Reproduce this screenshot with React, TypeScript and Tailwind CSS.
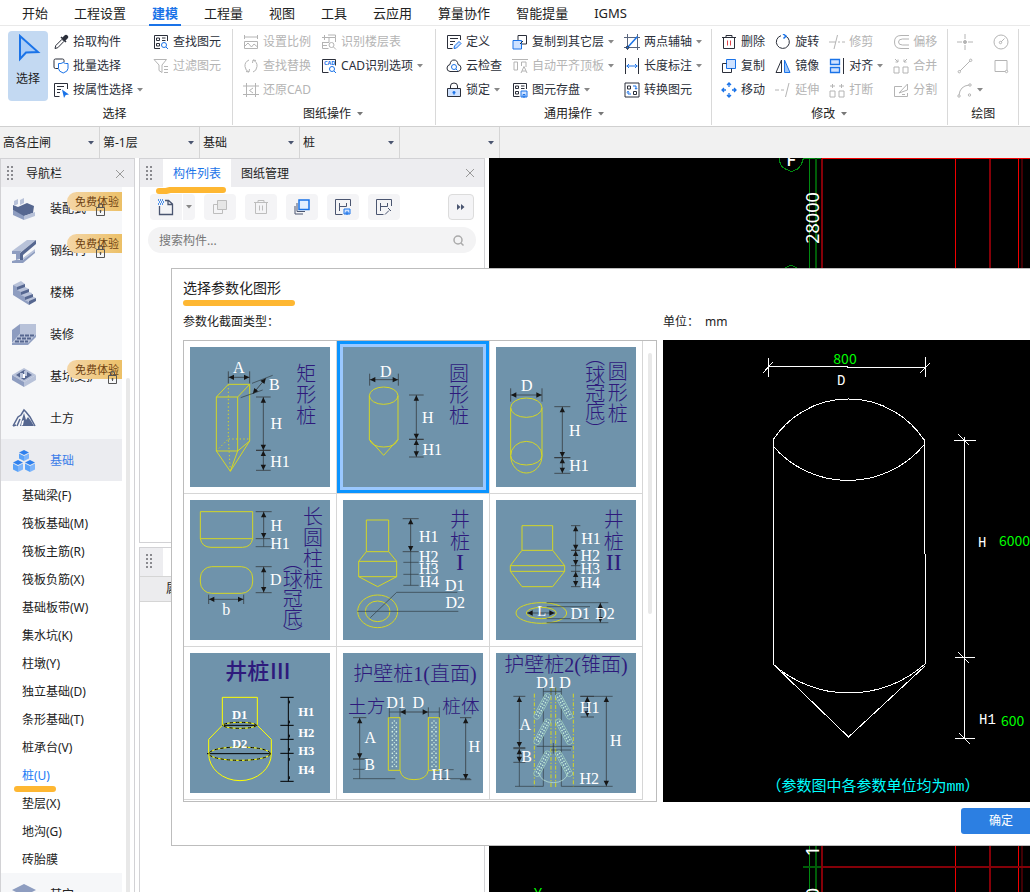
import React, { useState } from 'react';

const BLUE = '#1a73e8';
const SANS = '"Noto Sans", "Noto Sans CJK SC", sans-serif';
const SERIF = '"Liberation Serif", "Noto Sans CJK SC", serif';

/* ---------- 16px ribbon icons ---------- */

const icons: Record<string, React.ReactNode> = {
  pick: <><path d="M2 14.5l.8-3L9 5.300l2 2L4.800 13.700z" /><path d="M8 3l5 5M9.500 4.500L12 2q1-1 2 0t0 2l-2.500 2.500z" fill="currentColor" strokeWidth="1.500" /></>,
  batch: <><path d="M5 10.500H2.500q-1.500 0-1.500-1.500V2.500Q1 1 2.500 1h7Q11 1 11 2.500V4" /><path stroke={BLUE} d="M5.500 5.500q2.500.5 4.700-1Q12.500 6 15 5.500v5q0 3-4.800 4.500-4.700-1.500-4.700-4.500z" /></>,
  attr: <><path d="M14.500 7V1.500h-13v13h5M4 4.500h7M4 7.500h4M4 10.500h3" /><path fill={BLUE} stroke="none" d="M9 7.500l7 5-3.300.5-1.700 3z" /></>,
  find: <><path d="M14.500 7V1.500h-13v13H7M3.500 4h3v2.500h-3zM9 4h3.500M9 6.500h3.500M3.500 9.500h3V12h-3z" /><circle stroke={BLUE} cx="11" cy="11" r="2.500" /><path stroke={BLUE} d="M13 13l2 2" /></>,
  filter: <path d="M1 1.500h12.500L9 7v7.500l-3-2V7zM11 8.500h4M11 11.500h4M11 14.500h4" />,
  scale: <><path d="M1.500 1v4M14.500 1v4M1.500 3h13M1.500 7.500h13v7h-13zM2 12l3-3 3.500 4L11 10l3.500 3" /></>,
  replace: <path d="M6 2Q1.500 4 2 8.500T6 14M3 13.500l3 .5.500-3M10 2q4.500 2 4 6.500T10 14M13 2.500L10 2l-.5 3" />,
  restore: <path d="M0 4h16M3.500 1v14M0 12.500h16M12.500 1v14M10 6L6.500 8.500 10 11" />,
  floors: <path d="M3.500 1v5M1 3.500h13.500V8M7 1h7.500v2.500M1 8.500h7V4M1.500 8.500v6h6M1 11.500h5M10.500 8.500a2.500 2.500 0 100 5 2.500 2.500 0 000-5zM12.500 13l2.500 2.500" />,
  cad: <><path d="M14.500 7.500V1.500h-13v13h6" /><text x="3" y="7" fontSize="5.500" fontWeight="700" fill={BLUE} stroke="none">CAD</text><circle stroke={BLUE} cx="11" cy="11" r="2.500" /><path stroke={BLUE} d="M13 13l2 2" /></>,
  define: <><path d="M14.500 6V1.500h-13v13h5M4 4.500h8M4 7.500h5M4 10.500h3" /><path stroke={BLUE} fill="#cfe2ff" d="M8 14.500l.5-2.500 4.500-4.500 2 2-4.500 4.500z" /></>,
  cloud: <><path d="M4 13.500q-3.300-.5-3-3.500t3-3.500Q4.500 2 8 2t4 4.500q3 .5 3 3.500t-3 3.500z" /><circle stroke={BLUE} cx="8" cy="9" r="2.500" /><path stroke={BLUE} d="M10 11l1.500 1.500" /></>,
  lock: <><path fill="#cfe2ff" d="M1.500 6.500h13v8h-13z" /><path d="M4.500 6.500V4Q4.500 1 8 1t3.500 3v2.500" /><path stroke={BLUE} strokeWidth="1.500" d="M8 9v3.500M6.500 10.500h3" /></>,
  copy: <><path stroke={BLUE} fill="#cfe2ff" d="M5.500 1.500h9v9h-9z" /><path d="M5.500 5.500h-4v9h9v-4" /></>,
  layer: <><path stroke={BLUE} fill="#cfe2ff" d="M1 6.500h8.500V15H1z" /><path d="M6 6V1.500h8.500V10H10M8 10l3-3" /></>,
  autoAlign: <path d="M0 1.500h16M2 4h3.500v8H2zM9.500 8V4H14v5M9 15l3-6.500L15 15M10 13h4" />,
  save: <><path d="M14.500 7V1.500h-13v13h6M3.500 4h3v2.500h-3zM3.500 9.500h3V12h-3zM9 4h3.500M9 6.500h3.500" /><path stroke={BLUE} fill="#cfe2ff" d="M9 9h6v6H9zM11 15v-2.500h2V15z" /></>,
  axis: <><path d="M0 3.500h16M3.500 0v16M0 13.500h16M13.500 0v16" stroke="#59657c" /><path stroke={BLUE} strokeWidth="1.500" d="M3.500 13.500l10-11" /><circle cx="3.500" cy="13.500" r="1.300" fill={BLUE} /></>,
  length: <><path d="M1.500 0v16M14.500 0v16" /><path stroke={BLUE} d="M2.500 8h11M5 6L3 8l2 2M11 6l2 2-2 2" /></>,
  convert: <><path d="M1 1h14v14H1zM3.500 4h3v3h-3zM9.500 9.500h3v3h-3z" /><path stroke={BLUE} d="M9 4h3v3M11 6l1 1.300L13.300 6M7 12H4V9.500M3 10.500l1-1.300 1.200 1.300" /></>,
  trash: <><path d="M1 3.500h14M5 3.500v-2h6v2M2.500 3.500v11h11v-11" /><path stroke="#e0444b" d="M6.500 6.500v5M9.500 6.500v5" /></>,
  move: <path stroke={BLUE} strokeWidth="1.300" d="M8 1v4M8 11v4M1 8h4M11 8h4M6 3l2-2 2 2M6 13l2 2 2-2M3 6L1 8l2 2M13 6l2 2-2 2" />,
  rotate: <><path d="M6 1.700A6.500 6.500 0 1010.500 2" /><path stroke={BLUE} strokeWidth="1.500" d="M8 0l3 2-2.500 2.500" /></>,
  mirror: <><path d="M6.500 2v12.500H1z" /><path fill="#9cc5fa" stroke={BLUE} d="M9.500 2v12.500H15z" /></>,
  extend: <path d="M0 8h4M6 8h3M14 1l-3.500 14" />,
  trim: <path d="M0 8h7M9 8h2M13 8h3M8.500 1L5 15" />,
  align: <><path stroke={BLUE} fill="#cfe2ff" strokeWidth="1.300" d="M1.500 1.500h9v5h-9zM1.500 9.500h9v5h-9z" /><path d="M14.500 0v16" /></>,
  brk: <path d="M1 9h5v6H1zM10 9h5v6h-5zM3.500 2v4M1 4h5M12.500 2v4M10 4h5" />,
  merge: <path d="M1 9h5v6H1zM10 9h5v6h-5zM2 1l3 3M5 1.500V4H2.500M14 1l-3 3M11 1.500V4h2.500" />,
  offset: <path d="M16 1.500H8Q1.500 1.500 1.500 8T8 14.500h8M16 5H9.500Q5.500 5 5.500 8t4 3H16" />,
  split: <path d="M9 4.500H1.500v10h13V11M6 11l8.500-9v6zM9 12.500h3" />,
  point: <><path d="M0 8h5M11 8h5M8 0v5M8 11v5" /><circle cx="8" cy="8" r="1.500" fill="currentColor" /></>,
  line: <><path d="M3 13L13 3" /><circle cx="2.300" cy="13.700" r="1.200" /><circle cx="13.700" cy="2.300" r="1.200" /></>,
  arc: <><path d="M2 13Q3 4 12 3" /><circle cx="2" cy="14" r="1.200" /><circle cx="13" cy="3" r="1.200" /><circle cx="12.500" cy="13" r="1.200" /></>,
  circle: <><circle cx="8" cy="8" r="7" /><path d="M8 8l3.500-3.500" /><circle cx="7.500" cy="8.500" r="1.200" /></>,
  rect: <><path d="M2 2.500h12v11H2z" /><circle cx="13.500" cy="13.500" r="1.200" fill="white" /></>,
};

function Icon({ name }: { name: string }) {
  return (
    <svg width="16" height="16" viewBox="0 0 16 16" fill="none" stroke="currentColor" className="shrink-0">
      {icons[name]}
    </svg>
  );
}

function Caret() {
  return (
    <svg width="6" height="4" viewBox="0 0 6 4" className="shrink-0">
      <path d="M0 0h6L3 3.500z" fill="currentColor" />
    </svg>
  );
}

/* ---------- ribbon ---------- */

type Tool = { icon: string; label?: string; off?: boolean; caret?: boolean };

const tabs = ['开始', '工程设置', '建模', '工程量', '视图', '工具', '云应用', '算量协作', '智能提量', 'IGMS'];

const groups: { title: string; caret?: boolean; pad: string; columns: Tool[][] }[] = [
  {
    title: '选择',
    pad: 'pl-2 pr-[11px]',
    columns: [
      [{ icon: 'pick', label: '拾取构件' }, { icon: 'batch', label: '批量选择' }, { icon: 'attr', label: '按属性选择', caret: true }],
      [{ icon: 'find', label: '查找图元' }, { icon: 'filter', label: '过滤图元', off: true }],
    ],
  },
  {
    title: '图纸操作',
    caret: true,
    pad: 'pl-[10px] pr-3',
    columns: [
      [{ icon: 'scale', label: '设置比例', off: true }, { icon: 'replace', label: '查找替换', off: true }, { icon: 'restore', label: '还原CAD', off: true }],
      [{ icon: 'floors', label: '识别楼层表', off: true }, { icon: 'cad', label: 'CAD识别选项', caret: true }],
    ],
  },
  {
    title: '通用操作',
    caret: true,
    pad: 'pl-[10px] pr-[9px]',
    columns: [
      [{ icon: 'define', label: '定义' }, { icon: 'cloud', label: '云检查' }, { icon: 'lock', label: '锁定', caret: true }],
      [{ icon: 'layer', label: '复制到其它层', caret: true }, { icon: 'autoAlign', label: '自动平齐顶板', off: true, caret: true }, { icon: 'save', label: '图元存盘', caret: true }],
      [{ icon: 'axis', label: '两点辅轴', caret: true }, { icon: 'length', label: '长度标注', caret: true }, { icon: 'convert', label: '转换图元' }],
    ],
  },
  {
    title: '修改',
    caret: true,
    pad: 'pl-[9px] pr-[10px]',
    columns: [
      [{ icon: 'trash', label: '删除' }, { icon: 'copy', label: '复制' }, { icon: 'move', label: '移动' }],
      [{ icon: 'rotate', label: '旋转' }, { icon: 'mirror', label: '镜像' }, { icon: 'extend', label: '延伸', off: true }],
      [{ icon: 'trim', label: '修剪', off: true }, { icon: 'align', label: '对齐', caret: true }, { icon: 'brk', label: '打断', off: true }],
      [{ icon: 'offset', label: '偏移', off: true }, { icon: 'merge', label: '合并', off: true }, { icon: 'split', label: '分割', off: true }],
    ],
  },
  {
    title: '绘图',
    pad: 'pl-[9px] pr-[9px]',
    columns: [
      [{ icon: 'point', off: true }, { icon: 'line', off: true }, { icon: 'arc', off: true, caret: true }],
      [{ icon: 'circle', off: true }, { icon: 'rect', off: true }],
    ],
  },
];

function ToolButton({ tool }: { tool: Tool }) {
  return (
    <button
      aria-label={tool.label ?? tool.icon}
      disabled={tool.off}
      className={`flex h-6 items-center gap-1 whitespace-nowrap ${tool.off ? 'text-[#b4b4b4]' : 'text-[#2b2f3a]'}`}
    >
      <Icon name={tool.icon} />
      {tool.label && <span>{tool.label}</span>}
      {tool.caret && <span className="text-[#888]"><Caret /></span>}
    </button>
  );
}

function Ribbon() {
  const [tab, setTab] = useState('建模');
  return (
    <header className="shrink-0">
      <nav className="flex h-[26px] items-stretch gap-[26px] border-b border-[#e9e9e9] pl-[22px] text-[13px]">
        {tabs.map((t) => (
          <button
            key={t}
            onClick={() => setTab(t)}
            className={`relative shrink-0 pt-[3px] ${t === tab ? 'font-bold text-[#1a73e8]' : 'text-[#222]'}`}
          >
            {t}
            {t === tab && <span className="absolute -inset-x-[3px] -bottom-px h-[2px] bg-[#1a73e8]" />}
          </button>
        ))}
      </nav>
      <div className="flex border-b border-[#d0d0d0] pt-[3px] pb-px">
        {groups.map((g, i) => (
          <section key={g.title} className={`flex shrink-0 flex-col border-r border-[#d9d9d9] pt-px ${g.pad}`}>
            <div className="flex h-[72px] items-start">
              {i === 0 && (
                <button className="mt-px mr-[5px] flex h-[70px] w-10 flex-col items-center gap-[9px] rounded-sm bg-[#c3d9f2] pt-[3px]">
                  <svg width="24" height="28" viewBox="0 0 24 28" className="ml-[2px]">
                    <path d="M3 2v23l6-6.500 12-.5z" fill="#a9ccf7" stroke={BLUE} strokeWidth="2" />
                  </svg>
                  <span className="leading-4">选择</span>
                </button>
              )}
              <div className="flex gap-[10px]">
                {g.columns.map((col, c) => (
                  <div key={c} className="flex flex-col items-start">
                    {col.map((t) => <ToolButton key={t.icon} tool={t} />)}
                  </div>
                ))}
              </div>
            </div>
            <div className="flex h-[23px] items-center justify-center gap-[6px]">
              {g.title}
              {g.caret && <span className="text-[#777]"><Caret /></span>}
            </div>
          </section>
        ))}
      </div>
    </header>
  );
}

/* ---------- filter bar ---------- */

function FilterBar() {
  return (
    <div className="flex h-[31px] shrink-0 bg-[#f1f1f1]">
      {['高各庄闸', '第-1层', '基础', '桩', ''].map((v, i) => (
        <label key={i} className="relative flex w-[100px] items-center border-r border-[#d5d5d5]">
          <select aria-label={v || '构件'} className="h-full w-full appearance-none bg-transparent pl-[3px] text-[#222] outline-none">
            <option>{v}</option>
          </select>
          <span className="pointer-events-none absolute right-[5px] text-[#4a5570]"><Caret /></span>
        </label>
      ))}
    </div>
  );
}

/* ---------- shared panel parts ---------- */

function Grip() {
  return (
    <svg width="7" height="15" viewBox="0 0 7 15" fill="#8a8a8f" className="shrink-0">
      {[0, 4, 8, 12].map((y) => (
        <g key={y}><rect x="0" y={y} width="2" height="2" /><rect x="4" y={y} width="2" height="2" /></g>
      ))}
    </svg>
  );
}

function CloseButton() {
  return (
    <button aria-label="关闭" className="ml-auto mr-[9px] text-[#999]">
      <svg width="10" height="10" viewBox="0 0 10 10" stroke="currentColor"><path d="M1 1l8 8M9 1L1 9" /></svg>
    </button>
  );
}

/* ---------- navigation ---------- */

const D = '#566790';
const M = '#8e9dc0';
const L = '#b8c2d9';

const navIcons: Record<string, React.ReactNode> = {
  装配式: <><path fill={M} d="M1 13l11 5v5L1 18z" /><path fill={D} d="M1 8l5 2 9-4 7 3-1 7-9 3L1 13z" /><path fill={L} d="M2 4l4-2v5L2 9zM8 3l4-2v5L8 8zM12 19l11-4v4l-11 4z" /></>,
  钢结构: <><path fill={L} d="M0 12L15 1h9L9 13z" /><path fill={D} d="M24 1v4L11 16v5l-3 1v-8z" /><path fill={M} d="M0 12h9l-1 3H0zM4 15l4-1v6l-4 1z" /><path fill={L} d="M11 19l12-9v2L11 21z" /><path fill={M} d="M0 22l4-1h7l12-9v2L11 24H0z" /></>,
  楼梯: <><path fill={L} d="M1 4l8-4 4 3v3l4 2v3l3 1v3l4 2-8 4-3-2z" /><path fill={M} d="M1 4l4 2v3l4 2v3l4 2v3l4 2v3L1 14z" /><path fill={D} d="M5 6l8-3v3L5 9zM9 11l8-3v3l-8 3zM13 16l8-3v3l-8 3zM17 20l7-3v3l-7 4z" /></>,
  装修: <><path fill={L} d="M8 1h16v10H8z" /><path fill={M} d="M0 7l8-6v10l-8 9z" /><path fill={L} d="M8 11h16l-8 9H0z" /><path stroke={D} strokeWidth="2" strokeDasharray="4 1" d="M8 12.500h14M5 15.500h14M3 18.500h13" /><path fill={M} d="M0 20h16l8-9v3l-8 8H0z" /></>,
  基坑支护: <><path fill={L} d="M0 10L12 3l12 7-12 7z" /><path fill={D} d="M4 10l8-5 8 5-8 5z" /><path fill={M} d="M0 10l12 7v5L0 15z" /><path fill={L} d="M24 10l-12 7v5l12-7zM8 8h3v5H8zM12 6h3v5h-3z" /><path fill="white" d="M11 9h2v4h-2z" /></>,
  土方: <><path fill="none" stroke={D} strokeWidth="1.500" d="M1 19l5-9 3-2 3-5 2 2 4 5 5 9M1 19l3-1M8 12l-3 7" /><path fill={D} d="M8 19l4-13 2 7 2-3 3 4 3 5z" /><path fill="white" d="M10 14l-1 5 2-1 1-5z" /></>,
  基础: <><path fill="#2f80ed" d="M12 1l5 2.500L12 6 7 3.500zM6 11l5 2.500L6 16l-5-2.500zM18 11l5 2.500-5 2.500-5-2.500z" /><path fill="#5aa2f8" d="M7 4.500l5 2.500v5L7 9.500zM1 14.500L6 17v6l-5-2.500zM13 14.500l5 2.500v6l-5-2.500z" /><path fill="#7db5fb" d="M17 4.500L12 7v5l5-2.500zM11 14.500L6 17v6l5-2.500zM23 14.500L18 17v6l5-2.500z" /></>,
  其它: <><path fill={M} d="M0 7l12-6 12 6-12 6z" /><path fill={L} d="M0 12l12 6 12-6v4l-12 6-12-6z" /></>,
};

const navItems = [
  { label: '装配式', trial: true },
  { label: '钢结构', trial: true },
  { label: '楼梯' },
  { label: '装修' },
  { label: '基坑支护', trial: true },
  { label: '土方' },
  { label: '基础' },
];

const subItems = ['基础梁(F)', '筏板基础(M)', '筏板主筋(R)', '筏板负筋(X)', '基础板带(W)', '集水坑(K)', '柱墩(Y)', '独立基础(D)', '条形基础(T)', '桩承台(V)', '桩(U)', '垫层(X)', '地沟(G)', '砖胎膜'];

function NavItem({ label, trial, active }: { label: string; trial?: boolean; active?: boolean }) {
  return (
    <button className={`relative flex h-[42px] w-full shrink-0 items-center pt-[2px] pl-[11px] ${active ? 'bg-[#ebecf0] text-[#3b7de8]' : 'bg-[#f6f7f9] text-[#222]'}`}>
      <svg width="24" height="24" viewBox="0 0 24 24" className="shrink-0">{navIcons[label]}</svg>
      <span className="ml-[14px]">{label}</span>
      {trial && (
        <>
          <span className="absolute top-[5px] right-0 h-[19px] rounded-l-full bg-linear-to-r from-[#f4d6a6] to-[#ecc067] pr-[3px] pl-2 text-[11px] leading-[19px] text-[#6e4212]">免费体验</span>
          <svg width="9" height="13" viewBox="0 0 9 13" fill="none" stroke="#555" className="relative ml-[10px]">
            <path d="M.5 4.500h8v8h-8zM2.500 4.500V2q0-1.500 2-1.500t2 1.500v2.500M4.500 7v3M3.500 8h2" />
          </svg>
        </>
      )}
    </button>
  );
}

function Sidebar() {
  const [current, setCurrent] = useState('桩(U)');
  return (
    <aside className="flex w-[135px] shrink-0 flex-col border border-b-0 border-[#d2d2d5]">
      <div className="flex h-7 shrink-0 items-center bg-[#ededf0] pt-px pl-[6px]">
        <Grip />
        <span className="ml-3">导航栏</span>
        <CloseButton />
      </div>
      <div className="flex min-h-0 flex-1">
        <div className="flex w-[121px] flex-col overflow-hidden">
          {navItems.map((n) => <NavItem key={n.label} {...n} active={n.label === '基础'} />)}
          {subItems.map((s) => (
            <button
              key={s}
              onClick={() => setCurrent(s)}
              className={`relative h-7 shrink-0 pt-[2px] pl-[21px] text-left ${s === current ? 'text-[#1a7bf5]' : 'text-[#222]'}`}
            >
              {s}
              {s === current && <span className="absolute -bottom-[3px] left-[13px] h-[6px] w-[42px] rounded-full bg-[#feb732]" />}
            </button>
          ))}
          <NavItem label="其它" />
        </div>
        <div className="mt-[191px] ml-1 w-1 rounded-t-full bg-[#e8e8e8]" />
      </div>
    </aside>
  );
}

/* ---------- component list ---------- */

const toolBtn = 'flex h-[26px] items-center justify-center rounded bg-[#f4f4f6]';

function ComponentPanel() {
  return (
    <div className="flex w-[346px] shrink-0 flex-col gap-1">
      <section className="flex-[10] border border-[#d2d2d5]">
        <div className="flex h-7 items-center bg-[#ededf0] pl-[6px]">
          <Grip />
          <button className="relative ml-[10px] h-full bg-white px-[10px] pt-px text-[#1a73e8]">
            构件列表
            <svg width="72" height="9" viewBox="0 0 72 9" className="absolute -bottom-2 -left-2">
              <path d="M4 5h7l4-1h53" fill="none" stroke="#feb732" strokeWidth="6" strokeLinecap="round" strokeLinejoin="round" />
            </svg>
          </button>
          <button className="h-full px-[10px] pt-px">图纸管理</button>
          <CloseButton />
        </div>
        <div className="flex gap-[9px] px-[10px] pt-[7px] text-[#4a5570]">
          <div className="flex gap-px">
            <button aria-label="新建" className={`${toolBtn} w-8 rounded-r-none`}>
              <svg width="18" height="18" viewBox="0 0 18 18" fill="none" stroke="currentColor"><path strokeWidth="1.300" d="M2.500 8v8.500h13V6L11.500 2.500H8M11 3v3.500h4" /><path stroke={BLUE} strokeDasharray="1 1" strokeWidth="1.500" d="M1 2h5M2 4h5M1 6h5" /></svg>
            </button>
            <button aria-label="新建选项" className={`${toolBtn} w-3 rounded-l-none text-[#888]`}><Caret /></button>
          </div>
          <button aria-label="复制构件" className={`${toolBtn} w-8 text-[#bdbdbd]`}>
            <svg width="16" height="16" viewBox="0 0 16 16" stroke="currentColor" fill="none"><path fill="#e6e6e6" d="M5.500 1.500h9v9h-9z" /><path d="M5.500 5.500h-4v9h9v-4" /></svg>
          </button>
          <button aria-label="删除构件" className={`${toolBtn} w-8 text-[#bdbdbd]`}>
            <svg width="16" height="16" viewBox="0 0 16 16" stroke="currentColor" fill="none"><path d="M1 3.500h14M5 3.500v-2h6v2M2.500 3.500v11h11v-11M6.500 6.500v5M9.500 6.500v5" /></svg>
          </button>
          <button aria-label="层间复制" className={`${toolBtn} w-8`}>
            <svg width="16" height="16" viewBox="0 0 16 16" fill="none" stroke="currentColor"><path d="M3 4v8.500h8M1 7v8h8" /><path stroke={BLUE} strokeWidth="1.500" fill="#e3efff" d="M5 1h10v9.500H5z" /></svg>
          </button>
          <button aria-label="存档" className={`${toolBtn} w-8`}>
            <svg width="16" height="16" viewBox="0 0 16 16" fill="none" stroke="currentColor"><path d="M15.500 7V.5H.5v15h7M4.500 4v8M4.500 7.500h7M11.500 4v3.500" /><path stroke={BLUE} fill="#cfe2ff" d="M9 10h6v5H9zM11 15v-2h2v2z" /></svg>
          </button>
          <button aria-label="提取" className={`${toolBtn} w-8`}>
            <svg width="16" height="16" viewBox="0 0 16 16" fill="none" stroke="currentColor"><path d="M15.500 7V.5H.5v15h7M4.500 4v8M4.500 7.500h7M11.500 4v3.500M9 15.500l4-4M12 9l3 3" /></svg>
          </button>
          <button aria-label="更多" className={`${toolBtn} ml-auto w-[26px] border border-[#dcdcdc]`}>
            <svg width="8" height="6" viewBox="0 0 8 6" fill="currentColor"><path d="M0 0l3.500 3L0 6zM4 0l3.500 3L4 6z" /></svg>
          </button>
        </div>
        <label className="mx-2 mt-[7px] flex h-[26px] items-center rounded-full bg-[#f3f3f4] pr-3 pl-[11px]">
          <input aria-label="搜索构件" placeholder="搜索构件..." className="min-w-0 flex-1 bg-transparent pt-px outline-none placeholder:text-[#777]" />
          <svg width="11" height="11" viewBox="0 0 11 11" fill="none" stroke="#aaa" strokeWidth="1.500"><circle cx="5" cy="5" r="4" /><path d="M8 8l2.500 2.500" /></svg>
        </label>
      </section>
      <section className="flex-[9] border border-b-0 border-[#d2d2d5]">
        <div className="flex h-7 items-stretch">
          <div className="flex w-[23px] items-center bg-[#ededf0] pl-[6px]"><Grip /></div>
        </div>
        <div className="h-[26px] border-y border-[#d5d5d5] bg-[#ececee] pl-[26px] leading-6">属性名称</div>
      </section>
    </div>
  );
}

/* ---------- drawing area behind the dialog ---------- */

function Canvas() {
  return (
    <div className="relative min-w-0 flex-1 overflow-hidden bg-black">
      <svg className="absolute inset-0 h-full w-full" shapeRendering="crispEdges" fontFamily={SANS}>
        <g stroke="#008a10" fill="none">
          <path d="M290.500 0q0 9 6 11l6 2.500 6-2.500q4-3 6-11h18M294 111l8-4 8 4M320.500 0v900" />
          <path stroke="#005c08" strokeWidth="2" d="M327 0v900M314 709h19" />
        </g>
        <path d="M333 0v900M501 0v900" stroke="#840008" strokeWidth="2" />
        <path d="M533 0v900" stroke="#400004" strokeWidth="2" />
        <path d="M466.500 0v900M529.500 0v900" stroke="#f00000" />
        <line x1="333" x2="100%" y1="709" y2="709" stroke="#840008" strokeWidth="2" />
        <line x1="333" x2="100%" y1=".5" y2=".5" stroke="#f00000" />
        <g fill="white" fontSize="18" textAnchor="middle">
          <text x="302" y="8" fontWeight="500">F</text>
          <text transform="translate(330 60) rotate(-90)">28000</text>
          <text transform="translate(330 693) rotate(-90)">1</text>
          <text transform="translate(330 735) rotate(-90)">0</text>
        </g>
        <text x="45" y="740" fontSize="14" fill="#00ff00">Y</text>
      </svg>
    </div>
  );
}

/* ---------- section thumbnails, drawn on a 420 unit grid ---------- */

function Dim({ x1, y1, x2, y2, cap = 0 }: { x1: number; y1: number; x2: number; y2: number; cap?: number }) {
  const a = (Math.atan2(y2 - y1, x2 - x1) * 180) / Math.PI;
  const len = Math.hypot(x2 - x1, y2 - y1);
  return (
    <g transform={`translate(${x1} ${y1}) rotate(${a})`} stroke="#2a2a2a" strokeWidth="2">
      <path d={`M0 0H${len}M0 ${-cap}V${cap}M${len} ${-cap}V${cap}`} />
      <path d={`M1 0l16-8v16zM${len - 1} 0l-16-8v16z`} fill="#161616" stroke="none" />
    </g>
  );
}

function T({ x, y, size = 48, children }: { x: number; y: number; size?: number; children: string }) {
  return <text x={x} y={y} fontSize={size} fill="white" textAnchor="middle">{children}</text>;
}

function Down({ x, ys, children }: { x: number; ys: number[]; children: string }) {
  return (
    <text x={ys.map(() => x).join(' ')} y={ys.map((y) => y + 20).join(' ')} fontSize="60" fill="#2e1a7c" fontWeight="300" textAnchor="middle">
      {children}
    </text>
  );
}

function Across({ x, y, size = 56, bold, children }: { x: number; y: number; size?: number; bold?: boolean; children: string }) {
  return (
    <text x={x} y={y + 20} fontSize={size} fill="#2e1a7c" fontWeight={bold ? 500 : 300} textAnchor="middle">
      {children}
    </text>
  );
}

const thin = { stroke: '#2f3a40', strokeWidth: 2, fill: 'none' };
const shape = { stroke: '#d4d625', strokeWidth: 3, fill: 'none' };

function dots(x: number) {
  return Array.from({ length: 11 }, (_, i) => (
    <g key={`${x}-${i}`} fill="#d6f5e4">
      <circle cx={x} cy={210 + i * 13} r="2.500" />
      <circle cx={x + 12} cy={210 + i * 13} r="2.500" />
      <circle cx={x + 6} cy={204 + i * 13} r="2" />
    </g>
  ));
}

const sections: { name: string; art: React.ReactNode }[] = [
  {
    name: '矩形桩',
    art: (
      <>
        <g {...shape}>
          <path d="M79 150h64v162H79zM79 150l36-38h64l-36 38M179 112v170l-36 30M79 312l42 61 22-61M121 373l58-91" />
          <path strokeDasharray="4 7" d="M115 112v164h64M79 312l36-36 6 97" />
        </g>
        <Dim x1={115} y1={91} x2={179} y2={91} cap={18} />
        <Dim x1={188} y1={141} x2={228} y2={93} />
        <path {...thin} d="M186 109l62-24M152 152l66-23" />
        <Dim x1={220} y1={150} x2={220} y2={310} cap={22} />
        <Dim x1={220} y1={310} x2={220} y2={370} cap={22} />
        <T x={146} y={78}>A</T><T x={253} y={128}>B</T><T x={259} y={245}>H</T><T x={270} y={361}>H1</T>
        <Down x={349} ys={[82, 144, 208]}>矩形桩</Down>
      </>
    ),
  },
  {
    name: '圆形桩',
    art: (
      <>
        <g {...shape}>
          <ellipse cx="122" cy="146" rx="43" ry="26" />
          <path d="M79 146v131q8 23 43 23t43-23V146M79 277l43 48 43-48" />
        </g>
        <Dim x1={80} y1={98} x2={166} y2={98} cap={18} />
        <Dim x1={220} y1={144} x2={220} y2={277} cap={22} />
        <Dim x1={220} y1={277} x2={220} y2={330} cap={22} />
        <T x={128} y={91}>D</T><T x={254} y={228}>H</T><T x={268} y={324}>H1</T>
        <Down x={348} ys={[82, 144, 208]}>圆形桩</Down>
      </>
    ),
  },
  {
    name: '圆形桩（球冠底）',
    art: (
      <>
        <g {...shape}>
          <ellipse cx="91" cy="182" rx="47" ry="29" />
          <path d="M44 182v144M138 182v144M44 326a47 43 0 0194 0M44 326a47 28 0 0094 0M44 326a47 52 0 0094 0" />
        </g>
        <Dim x1={44} y1={144} x2={138} y2={144} cap={20} />
        <Dim x1={199} y1={179} x2={199} y2={332} cap={24} />
        <Dim x1={199} y1={332} x2={199} y2={379} cap={24} />
        <T x={92} y={132}>D</T><T x={236} y={266}>H</T><T x={249} y={372}>H1</T>
        <Down x={365} ys={[77, 139, 201]}>圆形桩</Down>
        <Down x={298} ys={[32, 89, 143, 197, 254]}>︵球冠底︶</Down>
      </>
    ),
  },
  {
    name: '长圆柱桩（球冠底）',
    art: (
      <>
        <g {...shape}>
          <path d="M31 35h157v81H31zM31 116q5 26 32 26h94q26 0 31-26" />
          <rect x="31" y="200" width="157" height="80" rx="34" />
        </g>
        <Dim x1={221} y1={35} x2={221} y2={116} cap={24} />
        <path {...thin} d="M221 116v24M197 140h48" />
        <Dim x1={221} y1={200} x2={221} y2={278} cap={24} />
        <Dim x1={56} y1={298} x2={161} y2={298} cap={14} />
        <T x={259} y={92}>H</T><T x={270} y={148}>H1</T><T x={257} y={256}>D</T><T x={109} y={345}>b</T>
        <Down x={369} ys={[52, 116, 178, 240]}>长圆柱桩</Down>
        <Down x={308} ys={[187, 242, 298, 354, 408]}>︵球冠底︶</Down>
      </>
    ),
  },
  {
    name: '井桩Ⅰ',
    art: (
      <>
        <g {...shape}>
          <path d="M70 60h67v95H70zM70 155l-23 29h114l-24-29M47 184v46h114v-46M47 230l57 30 57-30" />
          <ellipse cx="104" cy="334" rx="60" ry="49" />
          <ellipse cx="104" cy="334" rx="37" ry="31" />
        </g>
        <Dim x1={203} y1={56} x2={203} y2={155} cap={24} />
        <path {...thin} d="M203 155v101M181 187h46M181 223h46M181 256h46M82 353l79-76h182M43 334h303" />
        <T x={257} y={126}>H1</T><T x={257} y={185}>H2</T><T x={257} y={223}>H3</T><T x={259} y={261}>H4</T>
        <T x={335} y={274}>D1</T><T x={337} y={324}>D2</T>
        <Down x={351} ys={[62, 126]}>井桩</Down>
        <text x="351" y="211" fontSize="72" fill="#2e1a7c" textAnchor="middle">I</text>
      </>
    ),
  },
  {
    name: '井桩Ⅱ',
    art: (
      <>
        <g {...shape}>
          <path d="M78 77h92v74H78zM78 151l-35 46h163l-36-46M43 197v17h163v-17M43 214l35 46h92l36-46" />
          <ellipse cx="136" cy="339" rx="76" ry="31" />
          <ellipse cx="136" cy="339" rx="45" ry="17" />
        </g>
        <Dim x1={239} y1={77} x2={239} y2={151} cap={14} />
        <Dim x1={239} y1={151} x2={239} y2={197} cap={14} />
        <path {...thin} d="M239 197v17M152 308h185M152 320h130M152 356h130M152 368h185" />
        <Dim x1={239} y1={214} x2={239} y2={260} cap={14} />
        <Dim x1={93} y1={339} x2={177} y2={339} />
        <Dim x1={313} y1={308} x2={313} y2={368} />
        <T x={285} y={132}>H1</T><T x={283} y={183}>H2</T><T x={283} y={222}>H3</T><T x={283} y={265}>H4</T>
        <T x={137} y={348} size={44}>L</T><T x={253} y={356}>D1</T><T x={327} y={356}>D2</T>
        <text x="353" y="211" fontSize="72" fill="#2e1a7c" textAnchor="middle">II</text>
        <Down x={353} ys={[62, 126]}>井桩</Down>
      </>
    ),
  },
  {
    name: '井桩Ⅲ',
    art: (
      <>
        <g stroke="#ffff00" strokeWidth="3" fill="none">
          <path d="M97 217v-84h105v84l42 42v43a94 81 0 01-188 0v-43l41-42" />
          <path stroke="black" d="M97 217h105M51 302h192" />
          <ellipse cx="149" cy="217" rx="50" ry="9" />
          <ellipse cx="149" cy="302" rx="92" ry="20" />
          <g stroke="black" strokeDasharray="10 8">
            <ellipse cx="149" cy="217" rx="50" ry="9" />
            <ellipse cx="149" cy="302" rx="92" ry="20" />
          </g>
          <path stroke="black" d="M295 133v252M271 133h40M271 217h40M271 259h40M271 301h40M271 385h40" />
          <path stroke="black" d="M298 143v8M298 203v8M298 245v8M298 285v8M298 315v8M298 370v8" />
        </g>
        <g fontWeight="700">
          <T x={149} y={197} size={38}>D1</T><T x={149} y={286} size={38}>D2</T>
          <T x={349} y={189} size={38}>H1</T><T x={349} y={251} size={38}>H2</T>
          <T x={349} y={306} size={38}>H3</T><T x={349} y={362} size={38}>H4</T>
        </g>
        <Across x={205} y={57} size={66} bold>井桩Ⅲ</Across>
      </>
    ),
  },
  {
    name: '护壁桩1(直面)',
    art: (
      <>
        <g {...shape}>
          <path d="M136 194h35v158h-35zM256 194h33v158h-33zM171 352q4 28 42 28t43-28" />
        </g>
        {dots(148)}
        {dots(267)}
        <Dim x1={171} y1={177} x2={256} y2={177} cap={14} />
        <path {...thin} d="M139 177h32M139 163v30M256 177h33M289 163v30M50 318v59M30 318h45M30 349h45M30 377h127M288 350h44M288 377h94" />
        <Dim x1={50} y1={194} x2={50} y2={318} cap={20} />
        <Dim x1={368} y1={194} x2={368} y2={380} cap={17} />
        <T x={159} y={166}>D1</T><T x={226} y={166}>D</T><T x={82} y={269}>A</T><T x={80} y={351}>B</T>
        <T x={394} y={298}>H</T><T x={295} y={380}>H1</T>
        <Across x={216} y={64} size={60}>护壁桩1(直面)</Across>
        <Across x={71} y={159}>土方</Across>
        <Across x={354} y={159}>桩体</Across>
      </>
    ),
  },
  {
    name: '护壁桩2(锥面)',
    art: (
      <>
        <path stroke="#d4d625" strokeWidth="3" strokeDasharray="12 5 4 5" d="M115 122v280M232 122v280M165 104v300M179 104v300" />
        <path {...thin} d="M142 104v296M196 104v296M142 115h54M165 104v22M179 104v22M122 280h106M165 291h60M172 270v32" />
        {[131, 207, 303].map((y) => (
          <g key={y} strokeLinecap="round" fill="none">
            <path d={`M154 ${y}l-31 58M188 ${y}l32 58`} stroke="#a3d3c0" strokeWidth="20" />
            <path d={`M154 ${y}l-31 58M188 ${y}l32 58`} stroke="#6f93ab" strokeWidth="16" />
            <path d={`M151 ${y - 2}l-31 58M185 ${y + 2}l32 58`} stroke="#c5efdb" strokeWidth="5" strokeDasharray="0 9" />
            <path d={`M157 ${y + 2}l-31 58M191 ${y - 2}l32 58`} stroke="#c5efdb" strokeWidth="5" strokeDasharray="0 9" />
          </g>
        ))}
        <path d="M130 361a42 28 0 0084 0" stroke="#c5efdb" strokeWidth="2" fill="none" />
        <Dim x1={70} y1={130} x2={70} y2={284} cap={18} />
        <Dim x1={70} y1={287} x2={70} y2={328} cap={18} />
        <path {...thin} d="M70 328v72M57 400h85M196 400h154M252 130h98" />
        <Dim x1={274} y1={130} x2={274} y2={192} cap={20} />
        <Dim x1={331} y1={130} x2={331} y2={400} />
        <T x={150} y={105}>D1</T><T x={207} y={105}>D</T><T x={88} y={232}>A</T><T x={92} y={326}>B</T>
        <T x={281} y={181}>H1</T><T x={280} y={392}>H2</T><T x={359} y={279}>H</T>
        <Across x={210} y={38} size={60}>护壁桩2(锥面)</Across>
      </>
    ),
  },
];

/* ---------- parameter preview ---------- */

function Preview() {
  return (
    <div className="min-w-0 flex-1 overflow-hidden bg-black">
      <svg width="378" height="460" viewBox="0 0 378 460" fill="none" stroke="white" shapeRendering="crispEdges" fontFamily={SANS}>
        <path d="M105.500 26.500h79M184 27.500h78M105.500 18v19M262.500 17v20M100 33l10-11M257 33l10-10" />
        <path d="M110 100A90 90 0 01261 100M110 106A99 99 0 00261 105M110.500 99v225M261.500 99v115M262.500 214v110" />
        <path d="M110 324A114 114 0 00262 324M110 324l75.500 73L262 326" />
        <path d="M301.500 97v302M291 100.500h22M292 317.500h20M292 398.500h20M295 94l11 11M295 312l11 11M296 393l11 11" />
        <g stroke="none" fill="#00ff00" fontSize="14" fontFamily='"Noto Sans CJK SC", sans-serif'>
          <text x="182" y="24" textAnchor="middle">800</text>
          <text x="336" y="206">6000</text>
          <text x="338" y="386">600</text>
        </g>
        <g stroke="none" fill="white" fontSize="14" fontFamily='"Liberation Mono", monospace'>
          <text x="174" y="45">D</text>
          <text x="315" y="207">H</text>
          <text x="316" y="384">H1</text>
        </g>
        <text x="210" y="451" stroke="none" fill="#00ffff" fontSize="15" textAnchor="middle" fontFamily='"Liberation Mono", "Noto Sans CJK SC", monospace'>
          （参数图中各参数单位均为mm）
        </text>
      </svg>
    </div>
  );
}

function SectionDialog() {
  const [selected, setSelected] = useState('圆形桩');
  return (
    <div role="dialog" aria-label="选择参数化图形" className="absolute top-[110px] -right-6 left-[171px] border border-[#bdbdbd] bg-white pt-2 pr-3 pb-[11px] pl-[11px]">
      <h2 className="relative h-[22px] text-[14px] leading-[22px]">
        选择参数化图形
        <span className="absolute -bottom-[7px] left-0 h-[6px] w-28 rounded-full bg-[#feb732]" />
      </h2>
      <div className="mt-[13px] flex gap-[6px]">
        <div className="shrink-0">
          <div className="mb-2 h-5 leading-5">参数化截面类型：</div>
          <div className="flex border border-[#bcbcbc] pb-px">
            <div className="grid grid-cols-3">
              {sections.map((s) => (
                <div key={s.name} className="border-r border-b border-[#d6d6d6]">
                  <button
                    aria-label={s.name}
                    onClick={() => setSelected(s.name)}
                    className={`block border-[3px] p-[3px] ${s.name === selected ? 'border-[#0a94ff] bg-[#9ac8ff]' : 'border-white'}`}
                  >
                    <svg width="140" height="140" viewBox="0 0 420 420" fontFamily={SERIF} className="block bg-[#6f93ab]">
                      {s.art}
                    </svg>
                  </button>
                </div>
              ))}
            </div>
            <div className="mt-3 mr-1 ml-[5px] h-[261px] w-1 rounded-full bg-[#e9e9e9]" />
          </div>
        </div>
        <div className="flex min-w-0 flex-1 flex-col">
          <div className="mb-2 flex h-5 gap-[6px] leading-5"><span>单位：</span><span>mm</span></div>
          <Preview />
        </div>
      </div>
      <div className="mt-[6px] flex justify-end">
        <button className="h-[26px] w-20 rounded-[3px] bg-[#2c7fe2] text-white">确定</button>
      </div>
    </div>
  );
}

export default function App() {
  return (
    <div
      style={{ fontFamily: SANS }}
      className="flex h-screen flex-col overflow-hidden bg-white text-[12px] text-[#222]"
    >
      <Ribbon />
      <FilterBar />
      <main className="relative flex min-h-0 flex-1 gap-1 overflow-hidden">
        <Sidebar />
        <ComponentPanel />
        <Canvas />
        <SectionDialog />
      </main>
    </div>
  );
}
